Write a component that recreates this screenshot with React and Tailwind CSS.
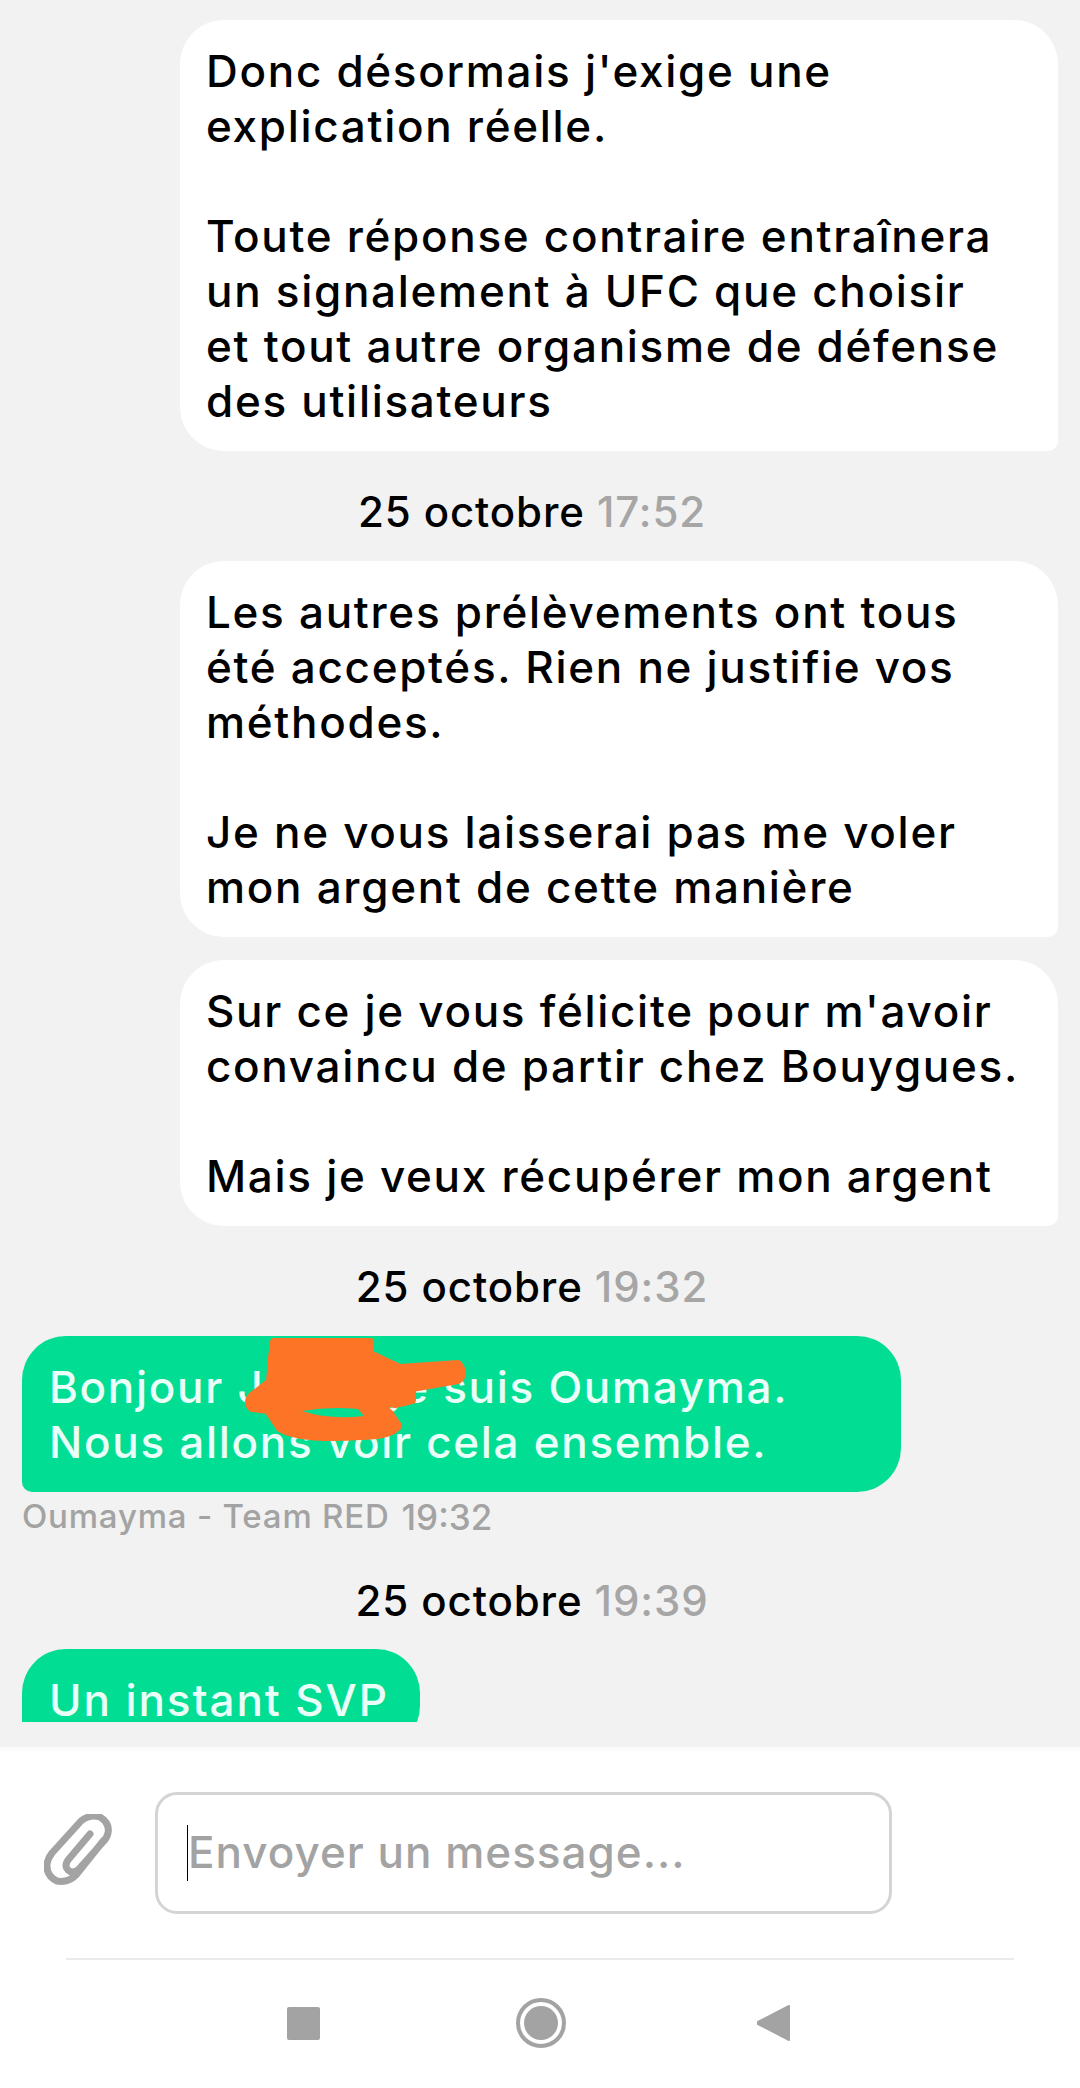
const font = { fontFamily: '"Inter", "Noto Sans", sans-serif' };

function Incoming({ lines, className = "" }) {
  return (
    <div className={`ml-[180px] w-[878px] rounded-[44px] rounded-br-[10px] bg-white pl-[26px] pt-[24px] pb-[22px] text-[44px] leading-[55px] font-medium tracking-[1.7px] text-black whitespace-pre-line ${className}`}>
      {lines}
    </div>
  );
}

function DateLine({ time, className = "" }) {
  return (
    <div className={`flex h-[50px] items-center justify-center pr-[16px] text-[42px] font-medium tracking-[0.9px] text-black ${className}`}>
      <span>25 octobre&nbsp;</span>
      <span className="text-[#a6a6a6]">{time}</span>
    </div>
  );
}

function Scribble() {
  return (
    <svg className="absolute left-[218px] top-0 h-[110px] w-[235px]" viewBox="0 0 235 110" fill="none">
      <path
        d="M34 6H130V18L160 32L218 28Q226 38 218 44L172 52L172 64L155 68L135 64L150 78L158 90Q150 100 120 100Q60 104 40 92L28 74L12 72Q6 66 12 60L30 46L32 22Z"
        fill="#fd7427" stroke="#fd7427" strokeWidth="8" strokeLinejoin="round"
      />
      <path d="M62 75Q90 70 118 73L124 80Q90 84 62 75Z" fill="#02dd94" />
    </svg>
  );
}

function Clip() {
  return (
    <svg className="h-[72px] w-[68px]" viewBox="0 0 68 72" fill="none" stroke="#a3a3a3" strokeWidth="7" strokeLinecap="round" strokeLinejoin="round">
      <path d="M60 26L32 61Q24 69 13 67Q2 62 3 50Q4 44 8 39L37 7Q46 0 56 3Q66 9 64 19Q63 24 59 28L34 56Q28 60 24 56Q20 52 24 46L46 20" />
    </svg>
  );
}

export default function App() {
  return (
    <div className="flex h-[2088px] w-[1080px] flex-col overflow-hidden bg-[#f2f2f2]" style={font}>
      <div className="h-[1722px] shrink-0 overflow-hidden pt-[20px]">
        <Incoming
          lines={"Donc désormais j'exige une\nexplication réelle.\n\nToute réponse contraire entraînera\nun signalement à UFC que choisir\net tout autre organisme de défense\ndes utilisateurs"}
        />
        <DateLine time="17:52" className="mt-[35px] mb-[25px]" />
        <Incoming
          lines={"Les autres prélèvements ont tous\nété acceptés. Rien ne justifie vos\nméthodes.\n\nJe ne vous laisserai pas me voler\nmon argent de cette manière"}
        />
        <Incoming
          className="mt-[23px]"
          lines={"Sur ce je vous félicite pour m'avoir\nconvaincu de partir chez Bouygues.\n\nMais je veux récupérer mon argent"}
        />
        <DateLine time="19:32" className="mt-[35px] mb-[25px]" />
        <div className="relative ml-[22px] w-[879px] rounded-[44px] rounded-bl-[10px] bg-[#02dd94] pl-[27px] pt-[24px] pb-[22px] text-[44px] leading-[55px] font-medium tracking-[1.7px] text-[#eafff8] whitespace-pre-line">
          <span>Bonjour J</span>
          <span className="inline-block w-[125px]" />
          <span>je suis Oumayma.</span>
          {"\nNous allons voir cela ensemble."}
          <Scribble />
        </div>
        <div className="ml-[22px] mt-[5px] flex h-[40px] items-center text-[#a3a3a3]">
          <span className="mr-[12px] text-[33px] font-medium tracking-[0.8px]">Oumayma - Team RED</span>
          <span className="text-[35px] font-medium">19:32</span>
        </div>
        <DateLine time="19:39" className="mt-[38px] mb-[24px]" />
        <div className="ml-[22px] w-[398px] rounded-[44px] rounded-bl-[10px] bg-[#02dd94] pl-[27px] pt-[24px] pb-[22px] text-[44px] leading-[55px] font-medium tracking-[1.9px] text-[#eafff8] whitespace-nowrap">
          Un instant SVP
        </div>
      </div>

      <div className="mt-[25px] flex flex-1 flex-col border-t-4 border-[#fafafa] bg-white">
        <div className="flex items-start pt-[41px]">
          <div className="ml-[44px] mt-[22px] w-[111px] shrink-0">
            <Clip />
          </div>
          <div className="flex h-[122px] w-[737px] items-center rounded-[22px] border-[3px] border-[#d4d4d4] pl-[29px]">
            <span className="h-[56px] w-px bg-black" />
            <span className="-mt-[2px] text-[44px] font-medium tracking-[1px] text-[#a3a3a3]">Envoyer un message...</span>
          </div>
        </div>
        <div className="mx-[66px] mt-[44px] h-[2px] bg-[#ebebeb]" />
        <div className="mt-[38px] flex h-[50px] items-center">
          <div className="ml-[287px] h-[33px] w-[33px] rounded-[2px] bg-[#a3a3a3]" />
          <div className="ml-[196px] flex h-[50px] w-[50px] items-center justify-center rounded-full border-[4px] border-[#a3a3a3]">
            <div className="h-[34px] w-[34px] rounded-full bg-[#a3a3a3]" />
          </div>
          <svg className="ml-[190px] h-[38px] w-[34px]" viewBox="0 0 34 38">
            <path d="M33 2V36L2 20V18Z" fill="#a3a3a3" stroke="#a3a3a3" strokeWidth="2" strokeLinejoin="round" />
          </svg>
        </div>
      </div>
    </div>
  );
}
